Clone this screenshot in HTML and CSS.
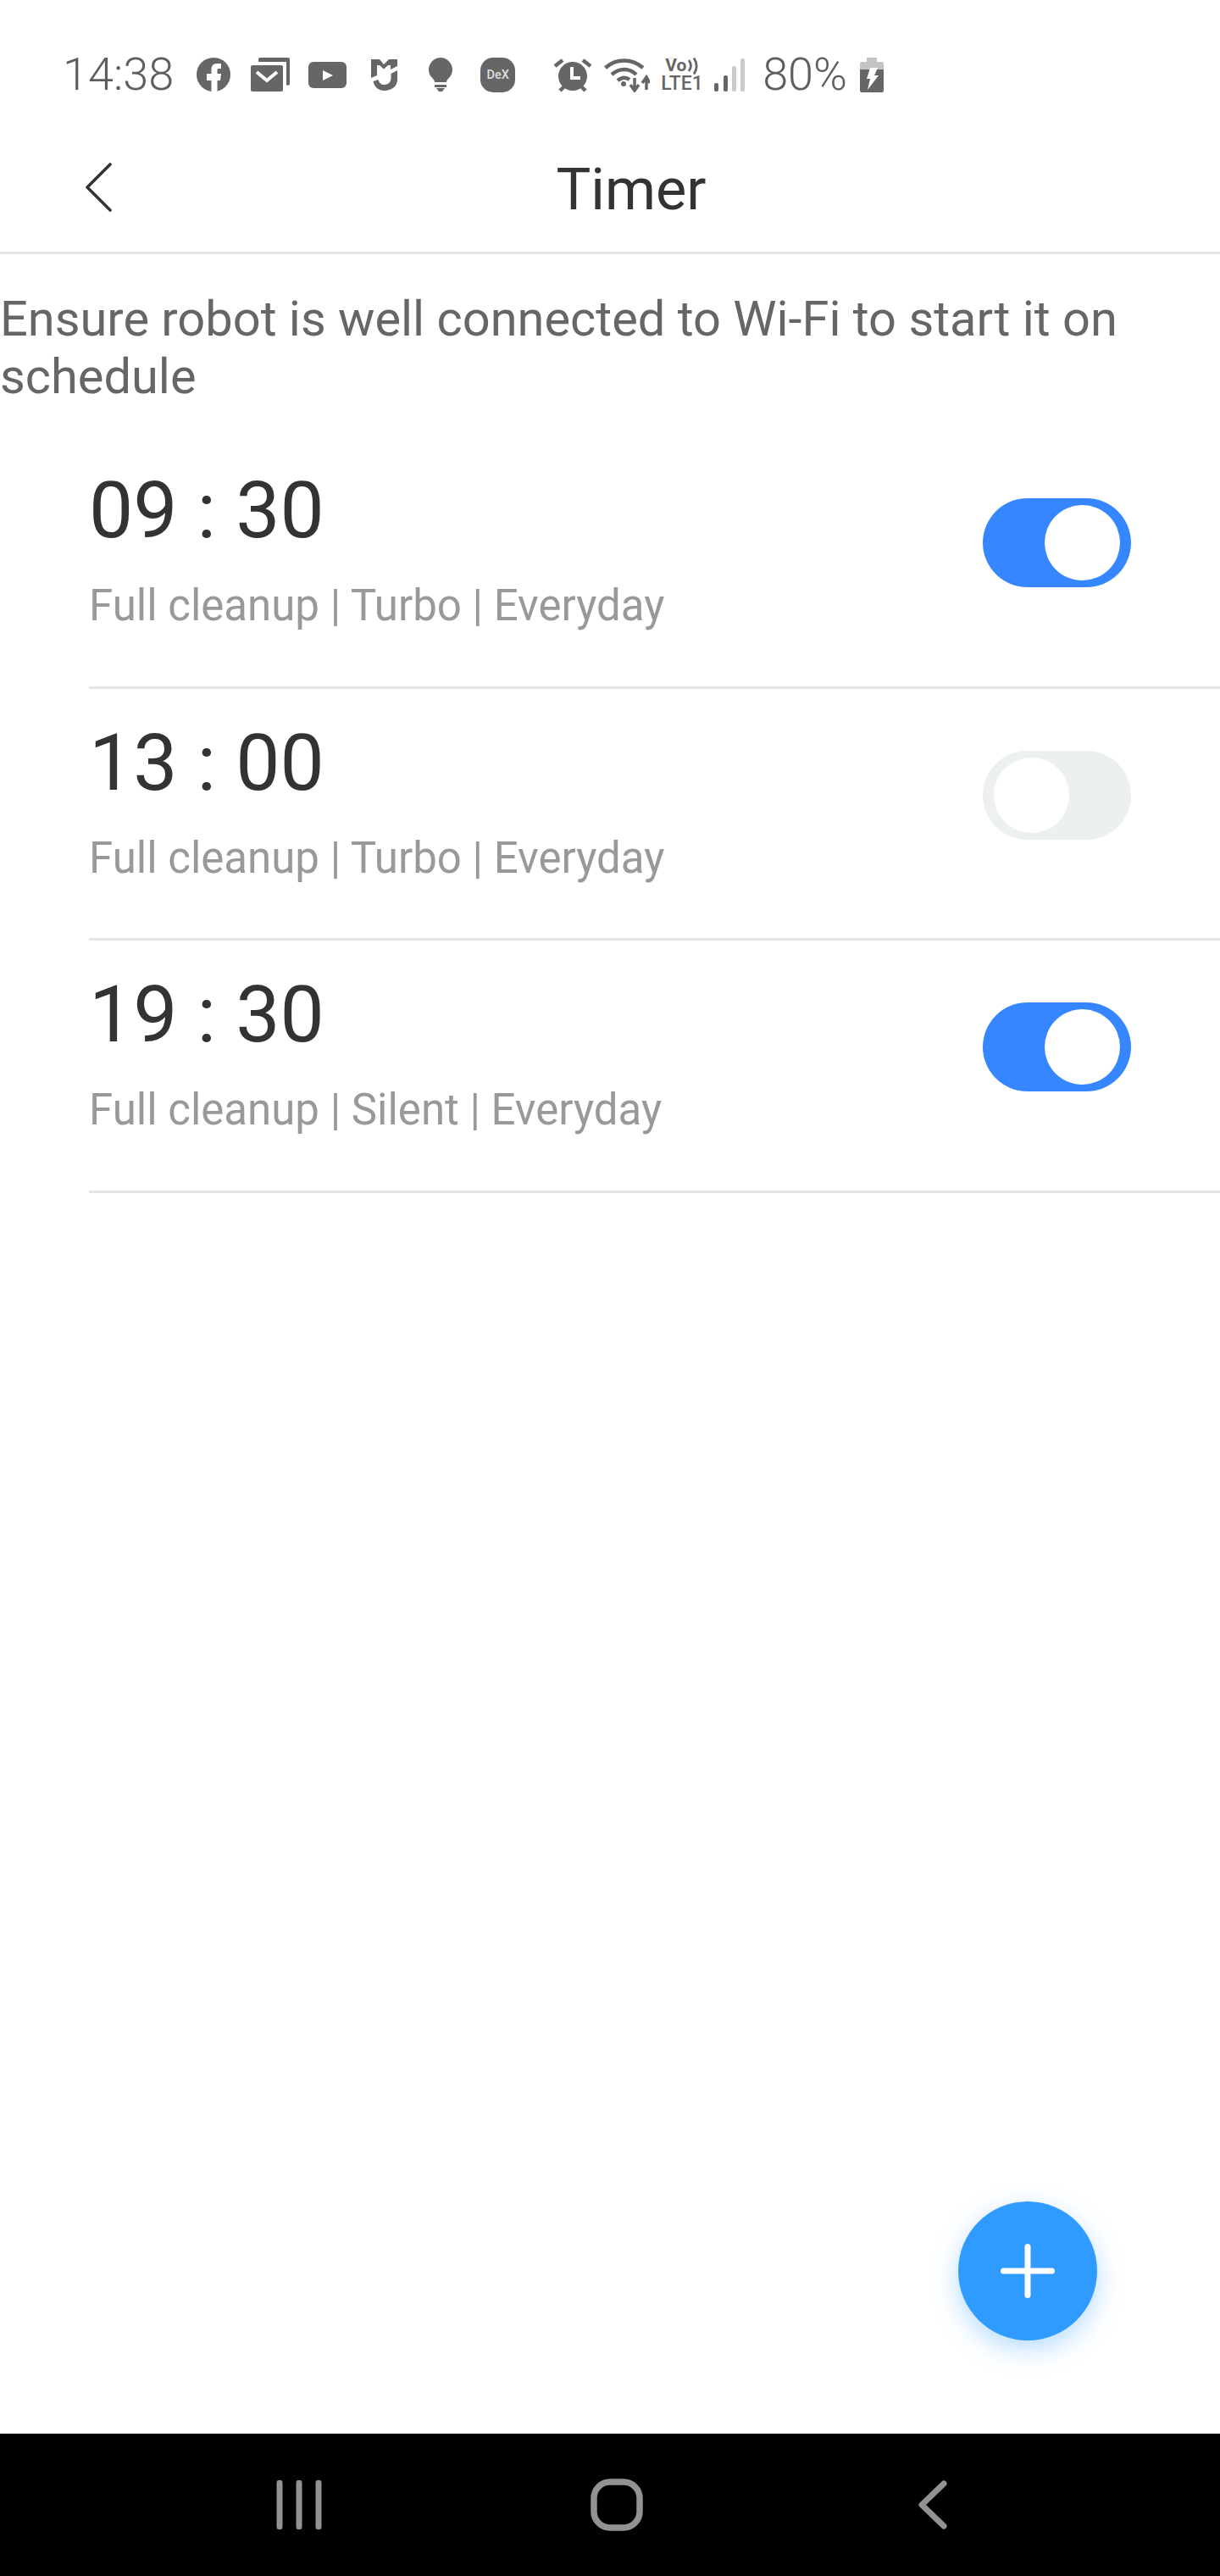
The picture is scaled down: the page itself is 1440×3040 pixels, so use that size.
FILE: index.html
```html
<!DOCTYPE html>
<html lang="en">
<head>
<meta charset="utf-8">
<title>Timer</title>
<link rel="stylesheet" href="styles.css">
</head>
<body>
<div class="screen">
  <div class="status">
    <span class="clock">14:38</span>
    <svg class="ic ic-fb" width="40" height="40" viewBox="0 0 40 40"><circle cx="20" cy="20" r="20" fill="#666"/><path fill="#fff" d="M17.500 40V27H12v-8h5.500v-5c0-5 3-7 7.500-7h4v6h-3c-1.500 0-1.500 1-1.500 2v4H29l-1 8h-3.500v13z"/></svg>
    <svg class="ic ic-mail" width="46" height="40" viewBox="0 0 46 40"><path fill="#666" d="M11 0h33a2 2 0 0 1 2 2v30h-1a2 2 0 0 1-3 0V5H9V2a2 2 0 0 1 2-2z"/><rect y="9" width="38" height="31" rx="2" fill="#666"/><path d="M7 17l12 10 12-10" fill="none" stroke="#fff" stroke-width="4"/></svg>
    <svg class="ic ic-yt" width="45" height="31" viewBox="0 0 45 31"><rect width="45" height="31" rx="6" fill="#666"/><path fill="#fff" d="M17 10l12 6-12 6z"/></svg>
    <svg class="ic ic-mi" width="31" height="37" viewBox="0 0 31 37"><path fill="#666" d="M0 0h10l5 6 6-6h10v8l-8 4V7h-3l-5 4.500L10 7H7v12l-7 3z"/><path fill="#666" d="M31 13v11c0 8-7 13-15.500 13C9 37 4 33 2.500 26l6-2c1 4 3.500 6 7 6 4.500 0 8-3 8-8v-5z"/></svg>
    <svg class="ic ic-bulb" width="28" height="40" viewBox="0 0 28 40"><path fill="#666" d="M14 0c8 0 14 7 14 14 0 5-2 8-5 11-1 1-2 2-2 4H7c0-2-1-3-2-4-3-3-5-6-5-11C0 7 6 0 14 0z"/><path fill="#666" d="M7 32h14v3H7zM9 36h10l-3 4h-4z"/></svg>
    <span class="ic ic-dex">DeX</span>
    <svg class="ic ic-alarm" width="44" height="41" viewBox="0 0 44 41"><circle cx="22" cy="22" r="17" fill="#666"/><path d="M1 10l9-7M43 10l-9-7M7 39l5-5M37 39l-5-5" stroke="#666" stroke-width="4.500" fill="none"/><path d="M21 11v13h10" stroke="#fff" stroke-width="4" fill="none"/></svg>
    <svg class="ic ic-wifi" width="54" height="41" viewBox="0 0 54 41"><path d="M1.500 12C14 .5 33 .5 46 12M9 20c9-8 21-8 29 0" fill="none" stroke="#666" stroke-width="4.500"/><path d="M16 27c5-4 10-4 14-1" fill="none" stroke="#666" stroke-width="4.500"/><circle cx="23" cy="31" r="3" fill="#666"/><path d="M36 24v14M31 32l5 7 5-7M50 38V23M45 30l5-7 4 7" fill="none" stroke="#666" stroke-width="3.500"/></svg>
    <div class="ic ic-volte">
      <div class="vo-line"><span class="vo-t">Vo</span><svg width="12" height="20" viewBox="0 0 12 20"><path d="M1 3c3 4 3 9 0 13M7 .5c4 6 4 13 0 19" fill="none" stroke="#666" stroke-width="2.800"/></svg></div>
      <div class="lte-t">LTE1</div>
    </div>
    <svg class="ic ic-signal" width="36" height="39" viewBox="0 0 36 39"><rect y="29" width="5" height="10" rx="2" fill="#666"/><rect x="11" y="20" width="5" height="19" rx="2" fill="#666"/><rect x="21" y="9" width="5" height="30" rx="2" fill="#c9c9c9"/><rect x="31" width="5" height="39" rx="2" fill="#c9c9c9"/></svg>
    <span class="pct">80%</span>
    <svg class="ic ic-batt" width="28" height="41" viewBox="0 0 28 41"><path fill="#c4c4c4" d="M8 0h12v5h6a2 2 0 0 1 2 2v9H0V7a2 2 0 0 1 2-2h6z"/><path fill="#666" d="M0 14h28v25a2 2 0 0 1-2 2H2a2 2 0 0 1-2-2z"/><path fill="#fff" d="M12 12h9l-4 9h5L9 38l3-13H8z"/></svg>
  </div>
  <header class="appbar">
    <svg class="back" width="32" height="58" viewBox="0 0 32 58"><path d="M30 2L3 29l27 27" fill="none" stroke="#333" stroke-width="3.600" stroke-linecap="round" stroke-linejoin="round"/></svg>
    <h1 class="title">Timer</h1>
  </header>
  <main class="content">
    <p class="notice">Ensure robot is well connected to Wi-Fi to start it on schedule</p>
    <ul class="rows">
      <li class="row">
        <div class="row-text"><div class="time">09 : 30</div><div class="sub">Full cleanup | Turbo | Everyday</div></div>
        <div class="toggle on"><span class="knob"></span></div>
      </li>
      <li class="row">
        <div class="row-text"><div class="time">13 : 00</div><div class="sub">Full cleanup | Turbo | Everyday</div></div>
        <div class="toggle"><span class="knob"></span></div>
      </li>
      <li class="row">
        <div class="row-text"><div class="time">19 : 30</div><div class="sub">Full cleanup | Silent | Everyday</div></div>
        <div class="toggle on"><span class="knob"></span></div>
      </li>
    </ul>
    <button class="fab" type="button" aria-label="Add"><svg width="64" height="64" viewBox="0 0 64 64"><path d="M32 3.500v57M3.500 32h57" stroke="#fff" stroke-width="7" stroke-linecap="round"/></svg></button>
  </main>
  <nav class="navbar">
    <svg width="54" height="58" viewBox="0 0 54 58"><path d="M4 3v52M27 3v52M50 3v52" stroke="#929292" stroke-width="7" stroke-linecap="round"/></svg>
    <svg class="nav-home" width="62" height="62" viewBox="0 0 62 62"><rect x="4" y="4" width="54" height="54" rx="19" fill="none" stroke="#929292" stroke-width="7.500"/></svg>
    <svg class="nav-back" width="34" height="58" viewBox="0 0 34 58"><path d="M30 4L4 29l26 25" fill="none" stroke="#929292" stroke-width="7" stroke-linecap="round" stroke-linejoin="round"/></svg>
  </nav>
</div>
</body>
</html>
```
FILE: styles.css
```css
* { box-sizing: border-box; }
html, body { margin: 0; padding: 0; background: #fff; }
body { font-family: Roboto, "Liberation Sans", sans-serif; }
.screen { width: 1440px; height: 3040px; display: flex; flex-direction: column; overflow: hidden; }

.status { height: 152px; padding: 24px 0 0 74px; display: flex; align-items: center; color: #5e5e5e; flex: none; }
.clock, .pct { font-weight: 300; font-size: 54px; line-height: 60px; }
.pct { margin-left: 21px; }
.ic { flex: none; display: block; }
.ic-fb { margin-left: 27px; }
.ic-mail { margin-left: 24px; }
.ic-yt { margin-left: 22px; }
.ic-mi { margin-left: 29px; }
.ic-bulb { margin-left: 37px; }
.ic-dex { margin-left: 33px; width: 41px; height: 41px; border-radius: 15px; background: #666; color: #ddd; font-size: 14.5px; font-weight: 500; line-height: 41px; text-align: center; }
.ic-alarm { margin-left: 46px; }
.ic-wifi { margin-left: 15px; }
.ic-volte { margin-left: 13px; width: 52px; height: 42px; display: flex; flex-direction: column; color: #666; }
.vo-line { height: 21px; padding-left: 5px; display: flex; align-items: center; gap: 2px; }
.vo-t { font-size: 21px; font-weight: 700; line-height: 21px; }
.lte-t { font-size: 23px; font-weight: 500; line-height: 21px; }
.ic-signal { margin-left: 11px; }
.ic-batt { margin-left: 15px; }

.appbar { height: 148px; flex: none; border-bottom: 3px solid #e4e4e4; display: flex; align-items: center; justify-content: center; position: relative; padding: 0 0 1px 50px; }
.back { position: absolute; left: 100px; top: 40px; }
.title { margin: 0; font-weight: 400; font-size: 68.5px; line-height: 80px; color: #333; }

.content { flex: 1; position: relative; background: #fff; }
.notice { margin: 0; padding-top: 42px; font-size: 57.75px; line-height: 68px; color: #666; width: 1340px; }
.rows { list-style: none; margin: 37px 0 0 105px; padding: 0; }
.row { height: 297.5px; border-bottom: 3px solid #e4e4e4; display: flex; justify-content: space-between; align-items: flex-start; padding-right: 105px; }
.row-text { padding-top: 33px; }
.time { font-size: 93px; line-height: 110px; color: #333; }
.sub { margin-top: 27px; font-size: 51px; line-height: 60px; color: #999; }
.toggle { width: 175px; height: 105px; margin-top: 73px; border-radius: 53px; background: #ecf0ef; display: flex; align-items: center; padding: 0 13px; }
.toggle.on { background: #3687ff; justify-content: flex-end; }
.knob { width: 89px; height: 89px; border-radius: 50%; background: #fff; }
.fab { position: absolute; left: 1131px; bottom: 110px; width: 164px; height: 164px; border: 0; padding: 0; border-radius: 50%; background: #2f9bff; box-shadow: 0 10px 30px rgba(47,155,255,.35); display: flex; align-items: center; justify-content: center; }

.navbar { height: 168px; flex: none; background: #000; padding-left: 326px; display: flex; align-items: center; }
.nav-home { margin-left: 317px; }
.nav-back { margin-left: 325px; }
```
